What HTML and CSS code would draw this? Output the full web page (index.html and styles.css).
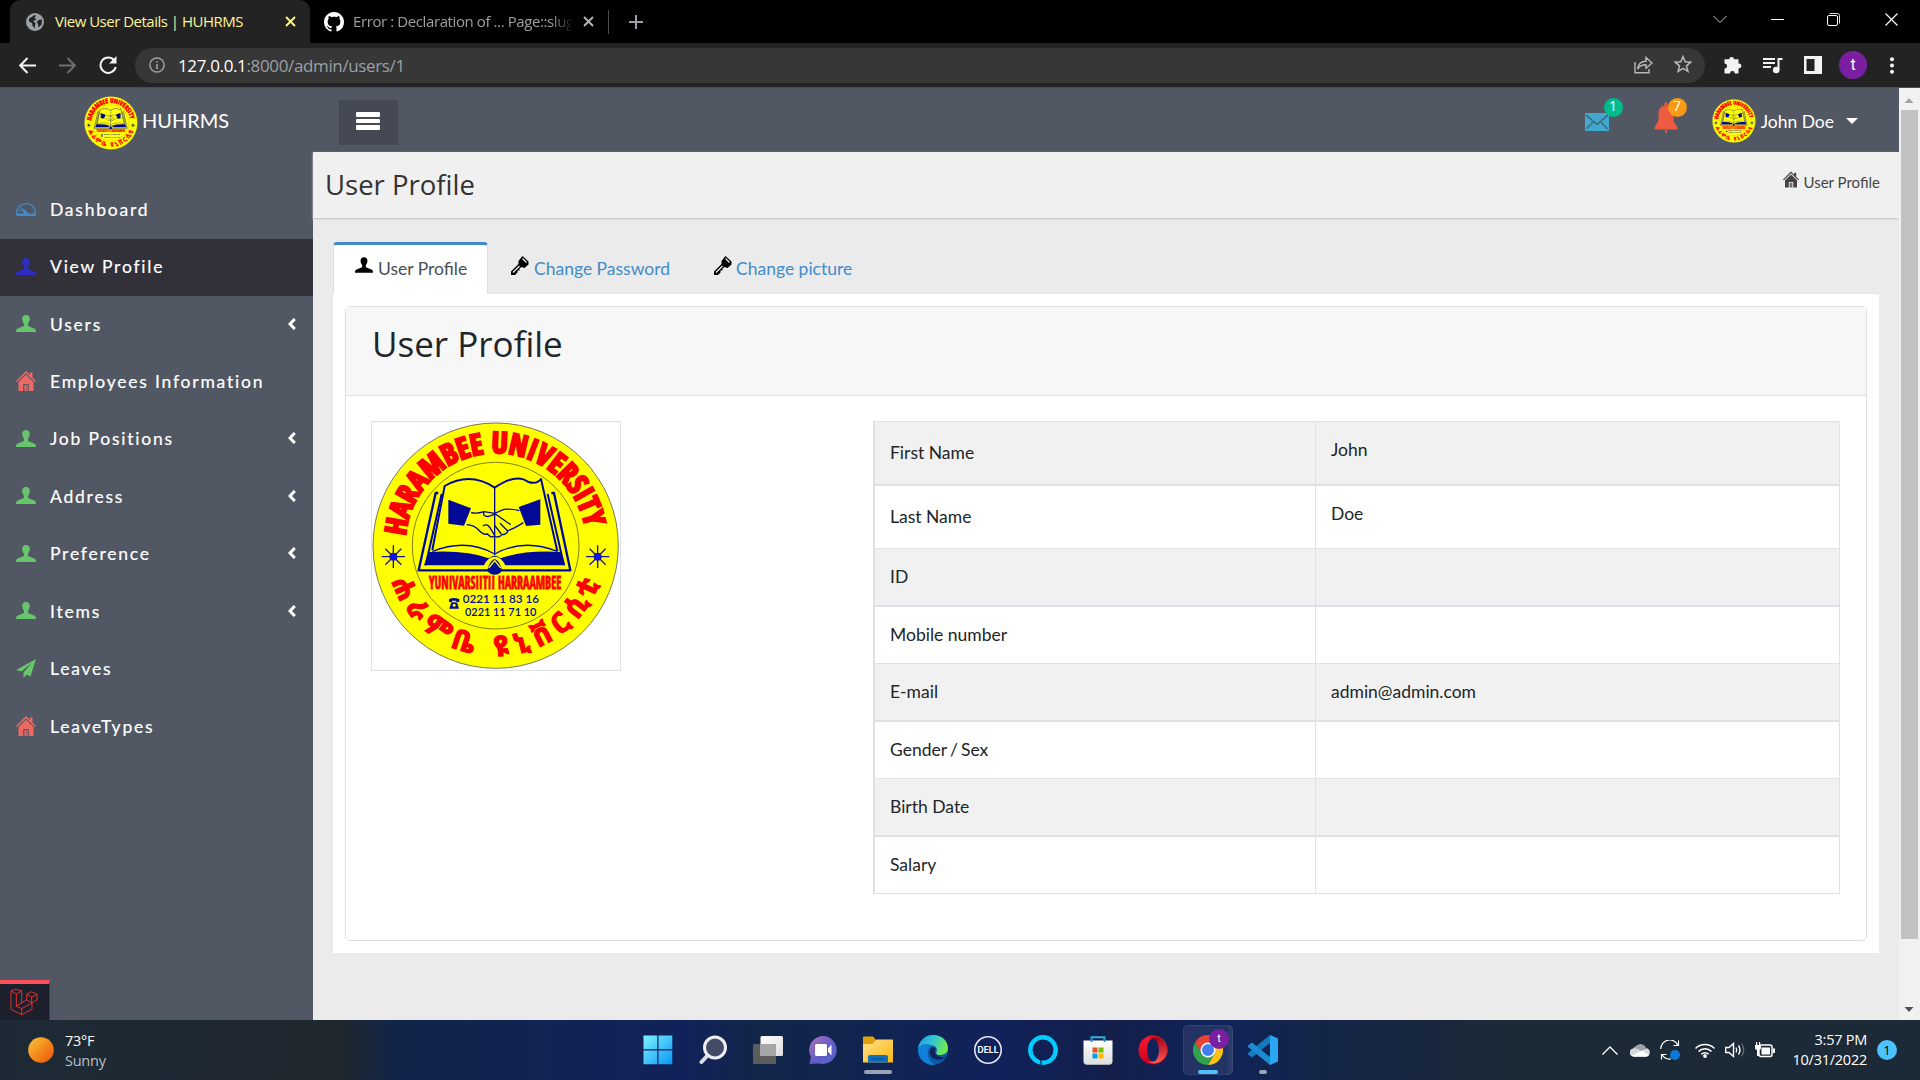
FILE: index.html
```html
<!DOCTYPE html>
<html lang="en">
<head>
<meta charset="utf-8">
<title>View User Details | HUHRMS</title>
<link rel="stylesheet" href="styles.css">
</head>
<body>
<svg class="defs" width="0" height="0" aria-hidden="true">
  <defs>
    <linearGradient id="g-win" x1="0" y1="0" x2="1" y2="1"><stop offset="0" stop-color="#7df3ff"/><stop offset="1" stop-color="#0a96f5"/></linearGradient>
    <linearGradient id="g-sun" x1="0" y1="0" x2="1" y2="1"><stop offset="0" stop-color="#f7c634"/><stop offset="0.8" stop-color="#f0660f"/></linearGradient>
    <linearGradient id="g-tv1" x1="0" y1="0" x2="1" y2="1"><stop offset="0" stop-color="#fff"/><stop offset="1" stop-color="#ddd"/></linearGradient>
    <linearGradient id="g-chat" x1="0" y1="0" x2="1" y2="1"><stop offset="0" stop-color="#b173b8"/><stop offset="0.55" stop-color="#625bc8"/><stop offset="1" stop-color="#5567c9"/></linearGradient>
    <linearGradient id="g-fold" x1="0" y1="0" x2="1" y2="1"><stop offset="0" stop-color="#ffe08a"/><stop offset="1" stop-color="#fcb911"/></linearGradient>
    <linearGradient id="g-edge" x1="0" y1="0" x2="1" y2="0.3"><stop offset="0" stop-color="#1b9de2"/><stop offset="0.55" stop-color="#35c6d6"/><stop offset="1" stop-color="#6bea50"/></linearGradient>
    <linearGradient id="g-opera" x1="0" y1="0" x2="0" y2="1"><stop offset="0" stop-color="#ff1b2d"/><stop offset="1" stop-color="#c4001b"/></linearGradient>
    <linearGradient id="g-opera2" x1="0" y1="0" x2="0" y2="1"><stop offset="0" stop-color="#a50014"/><stop offset="1" stop-color="#ff5a5a"/></linearGradient>
    <linearGradient id="g-store" x1="0" y1="0" x2="0" y2="1"><stop offset="0" stop-color="#fff"/><stop offset="1" stop-color="#dcdcdc"/></linearGradient>
    <path id="arc-top" d="M136.500 378A272 272 0 0 1 677 364"/>
    <path id="arc-bottom" d="M95 515A330 330 0 0 0 721 510"/>
    <symbol id="seal" viewBox="33 33 750 750">
      <circle cx="407" cy="407" r="368" fill="#ff0" stroke="#77775f" stroke-width="3"/>
      <circle cx="407" cy="407" r="250" fill="none" stroke="#66660a" stroke-width="2.500"/>
      <text class="seal-ring" font-size="88" textLength="782" lengthAdjust="spacingAndGlyphs"><textPath href="#arc-top" textLength="782" lengthAdjust="spacingAndGlyphs">HARAMBEE UNIVERSITY</textPath></text>
      <text class="seal-geez" font-size="84"><textPath href="#arc-bottom" textLength="812">ሐራምቤ ዩኒቨርሲቲ</textPath></text>
      <g fill="none" stroke="#000a96" stroke-width="6" stroke-linejoin="round">
        <path d="M235 249h-8L176 481H385M574 249h8L631 481H424" stroke-width="7"/>
        <path d="M245 252L197 466M563 252L612 466" />
        <path d="M217 420L254 228Q330 184 404 233Q470 188 505 216Q530 224 543 207L592 424"/>
        <path d="M217 424Q320 384 404 432Q490 384 592 424" stroke-width="4"/>
        <path d="M404 233V436" stroke-width="4"/>
      </g>
      <path d="M207 426Q320 420 386 445Q404 430 422 445Q490 420 602 426L616 466H436Q424 440 404 440T372 466H192Z" fill="#000a96"/>
      <path d="M382 482Q386 456 404 446Q422 456 426 482Q418 494 404 494T382 482Z" fill="#000a96"/>
      <path d="M386 474L404 452L422 474" stroke="#ff0" stroke-width="4" fill="none"/>
      <path d="M265 269L333 295L312 347L265 341ZM541 268L476 291L498 348L541 344Z" fill="#000a96"/>
      <path d="M333 308Q352 312 372 305L404 310L432 298Q456 296 478 302M320 344Q342 345 356 360Q370 376 382 372Q394 386 404 378Q416 386 426 374Q440 374 444 362Q462 356 490 338M372 305Q366 318 384 320L406 312L452 344M420 340L444 364M404 346L424 372M388 350L404 376M368 348Q384 340 388 352" fill="none" stroke="#000a96" stroke-width="4"/>
      <g stroke="#1a1a8c" stroke-width="4">
        <path d="M65 440H135M100 406V474M76 416L124 464M124 416L76 464M678 440H748M713 406V474M689 416L737 464M737 416L689 464"/>
        <circle cx="100" cy="440" r="10" fill="#11f"/><circle cx="713" cy="440" r="10" fill="#11f"/>
      </g>
      <text class="seal-sub" x="207" y="538" font-size="52" textLength="397" lengthAdjust="spacingAndGlyphs">YUNIVARSIITII HARRAAMBEE</text>
      <text class="seal-num" x="308" y="578" font-size="33" textLength="229" lengthAdjust="spacingAndGlyphs">0221 11 83 16</text>
      <text class="seal-num" x="315" y="617" font-size="33" textLength="214" lengthAdjust="spacingAndGlyphs">0221 11 71 10</text>
      <path d="M267 576V568Q282 560 298 568V576H289V572H276V576ZM274 577H291L297 596H268Z" fill="#000a96"/>
      <circle cx="282.500" cy="586" r="4.500" fill="#ff0"/>
    </symbol>
    <symbol id="i-user" viewBox="0 0 20 17"><path d="M10 0C7.400 0 6.100 1.700 6.200 4.100C6.300 6 7 7.600 7.900 8.600V11L1.800 13.500C.5 14.100 0 15 0 17H20C20 15 19.500 14.100 18.200 13.500L12.100 11V8.600C13 7.600 13.700 6 13.800 4.100C13.900 1.700 12.600 0 10 0Z" fill="currentColor"/></symbol>
    <symbol id="i-home" viewBox="0 0 20 20"><path d="M0 10L10 0L14 4V1.500H16.500V6.500L20 10L19 11L10 2.200L1 11Z" fill="currentColor"/><path d="M10 3.800L17.500 11V20H12.800V13H7.200V20H2.500V11Z" fill="currentColor"/><path d="M8.200 14H11.800V20H8.200Z" fill="currentColor" opacity=".75"/></symbol>
    <symbol id="i-gauge" viewBox="0 0 20 14"><path d="M1 13.300A9.300 9.300 0 1 1 19 13.300Z" fill="none" stroke="currentColor" stroke-width="1.300"/><path d="M1 11.500H8L4 4.500L11 9.500L12 11.500H19V13.500H1Z" fill="currentColor"/><circle cx="3.800" cy="8.500" r=".9" fill="currentColor"/></symbol>
    <symbol id="i-plane" viewBox="0 0 20 19"><path d="M20 0L0 11L5.500 12.500L15.500 4L7.500 13.500V19L10.500 15.700L14.500 17.500Z" fill="currentColor"/></symbol>
    <symbol id="i-key" viewBox="0 0 18 19"><path d="M11.500 0L17.500 5.500V8.500L13.500 12L10.500 11L8.500 12.500V14.500H6.500V16.500L4 19H0V15.500L7.500 8V5Z" fill="#000"/><path d="M11.500 2.500L15.500 6.500M2 16.500L8.500 10" stroke="#eee" stroke-width="1.300"/></symbol>
    <symbol id="i-left" viewBox="0 0 8 12"><path d="M6.800 1L2 6L6.800 11" fill="none" stroke="#fff" stroke-width="3"/></symbol>
  </defs>
</svg>

<div class="screen">
  <div class="tabstrip">
    <div class="btab btab-active">
      <svg class="fav" width="18" height="18" viewBox="0 0 18 18"><circle cx="9" cy="9" r="9" fill="#9aa0a6"/><path d="M3 5.500Q6 4 8 2.200L10 2.500L8.500 5L10.500 6.500L7 8L9.500 10L8.500 15.500L6.500 12.500L6 10L3 8.500ZM12.500 7L16 6.500L15.500 11.500L12.500 14.500L12 11L10.800 9Z" fill="#232323"/></svg>
      <span class="btab-title t1">View User Details | HUHRMS</span>
      <svg class="x" width="11" height="11" viewBox="0 0 11 11"><path d="M1 1L10 10M10 1L1 10" stroke="#fdf39a" stroke-width="1.900"/></svg>
    </div>
    <div class="btab btab-idle">
      <svg class="fav" width="20" height="20" viewBox="0 0 16 16"><path fill="#fff" d="M8 0C3.580 0 0 3.580 0 8c0 3.540 2.290 6.530 5.470 7.590.4.070.55-.17.55-.38 0-.19-.01-.82-.01-1.490-2.010.37-2.530-.49-2.690-.94-.09-.23-.48-.94-.82-1.130-.28-.15-.68-.52-.01-.53.63-.01 1.080.58 1.230.82.72 1.210 1.870.87 2.330.66.07-.52.28-.87.51-1.070-1.780-.2-3.640-.89-3.640-3.950 0-.87.31-1.590.82-2.150-.08-.2-.36-1.020.08-2.120 0 0 .67-.21 2.200.82.64-.18 1.320-.27 2-.27s1.360.09 2 .27c1.530-1.040 2.200-.82 2.200-.82.44 1.100.16 1.920.08 2.120.51.56.82 1.270.82 2.150 0 3.070-1.870 3.750-3.650 3.950.29.25.54.73.54 1.480 0 1.070-.01 1.930-.01 2.200 0 .21.15.46.55.38A8.010 8.010 0 0 0 16 8c0-4.420-3.580-8-8-8z"/></svg>
      <span class="btab-title t2">Error : Declaration of ... Page::slug</span>
      <svg class="x" width="11" height="11" viewBox="0 0 11 11"><path d="M1 1L10 10M10 1L1 10" stroke="#b4b8bc" stroke-width="1.800"/></svg>
    </div>
    <svg class="plus" width="14" height="14" viewBox="0 0 14 14"><path d="M7 0V14M0 7H14" stroke="#9aa0a6" stroke-width="2"/></svg>
    <div class="wincontrols">
      <svg width="14" height="9" viewBox="0 0 14 9"><path d="M.5 1L7 7.500L13.500 1" fill="none" stroke="#ccc"/></svg>
      <svg width="13" height="13" viewBox="0 0 13 13"><path d="M0 6.500H13" stroke="#fff"/></svg>
      <svg width="13" height="13" viewBox="0 0 13 13"><rect x=".5" y="2.500" width="10" height="10" rx="1.500" fill="none" stroke="#fff"/><path d="M2.500 .5H10.500Q12.500 .5 12.500 2.500V10.500" fill="none" stroke="#ddd"/></svg>
      <svg width="13" height="13" viewBox="0 0 13 13"><path d="M.5 .5L12.500 12.500M12.500 .5L.5 12.500" stroke="#fff" stroke-width="1.200"/></svg>
    </div>
  </div>

  <div class="toolbar">
    <svg width="17" height="17" viewBox="0 0 17 17"><path d="M17 8.500H1.500M8.500 1L1.200 8.500L8.500 16" fill="none" stroke="#f1f3f4" stroke-width="2"/></svg>
    <svg width="17" height="17" viewBox="0 0 17 17"><path d="M0 8.500H15.500M8.500 1L15.800 8.500L8.500 16" fill="none" stroke="#6f6f6f" stroke-width="2"/></svg>
    <svg width="18" height="18" viewBox="0 0 18 18"><path d="M15.200 4.300A7.700 7.700 0 1 0 16.700 11" fill="none" stroke="#f1f3f4" stroke-width="2"/><path d="M17.500 0V7.500H10Z" fill="#f1f3f4"/></svg>
    <div class="omnibox">
      <svg width="16" height="16" viewBox="0 0 16 16"><circle cx="8" cy="8" r="7.100" fill="none" stroke="#9aa0a6" stroke-width="1.500"/><path d="M8 7V12M8 4V5.600" stroke="#9aa0a6" stroke-width="1.700"/></svg>
      <span class="url"><b>127.0.0.1</b>:8000/admin/users/1</span>
      <svg class="share" width="19" height="18" viewBox="0 0 19 18"><path d="M1 6V16.800H15V13" fill="none" stroke="#b8b8b8" stroke-width="1.400"/><path d="M3.500 13Q4.500 5.500 12 5.300V1.500L18 7L12 12.300V8.700Q6.500 8.500 3.500 13Z" fill="none" stroke="#b8b8b8" stroke-width="1.400"/></svg>
      <svg class="star" width="18" height="18" viewBox="0 0 18 18"><path d="M9 1.500L11.200 6.700L16.800 7.200L12.500 10.800L13.900 16.300L9 13.300L4.100 16.300L5.500 10.800L1.200 7.200L6.800 6.700Z" fill="none" stroke="#b8b8b8" stroke-width="1.500"/></svg>
    </div>
    <div class="exts">
      <svg width="18" height="18" viewBox="0 0 18 18"><path d="M5.200 3.300A2.400 2.400 0 0 1 10 3.300H14.500V7.700A2.300 2.300 0 0 1 15.600 12.300H14.500V17.500H10.800A2.400 2.400 0 0 0 6 17.500H.5V12.500A2.500 2.500 0 0 0 .5 7.500V3.300Z" fill="#f1f3f4"/></svg>
      <svg width="20" height="17" viewBox="0 0 20 17"><path d="M0 2H12M0 6H12M0 10H8" stroke="#f1f3f4" stroke-width="1.900"/><path d="M15.500 13V2H19.500" fill="none" stroke="#f1f3f4" stroke-width="2"/><circle cx="13.200" cy="13" r="3.300" fill="#f1f3f4"/></svg>
      <svg width="18" height="18" viewBox="0 0 18 18"><path d="M0 0H18V18H0ZM2.500 3V15H10.500V3Z" fill="#f1f3f4" fill-rule="evenodd"/></svg>
      <span class="me">t</span>
      <svg width="4" height="17" viewBox="0 0 4 17"><circle cx="2" cy="2.200" r="2" fill="#f1f3f4"/><circle cx="2" cy="8.500" r="2" fill="#f1f3f4"/><circle cx="2" cy="14.800" r="2" fill="#f1f3f4"/></svg>
    </div>
  </div>

  <div class="viewport">
    <div class="app">
      <header class="top">
        <div class="brand"><svg width="54" height="54"><use href="#seal"/></svg><span>HUHRMS</span></div>
        <div class="burger"><i></i><i></i><i></i></div>
        <div class="notices">
          <div class="notice mail"><svg width="24" height="18" viewBox="0 0 24 18"><rect width="24" height="18" rx="1" fill="#41a9cf"/><path d="M1 2L12 11.500L23 2M1.500 16L8.500 8.500M22.500 16L15.500 8.500" fill="none" stroke="#3c6f88" stroke-width="1.700"/></svg><span class="badge green">1</span></div>
          <div class="notice bell"><svg width="24" height="32" viewBox="0 0 24 32"><circle cx="12" cy="2" r="1.700" fill="#ef5b40"/><path d="M12 3.500C6.500 3.500 4.500 7 4.500 12V18C4.500 20.500 .5 23 .5 27.500H23.500C23.500 23 19.500 20.500 19.500 18V12C19.500 7 17.500 3.500 12 3.500ZM10.500 28.500H13.500L12 32Z" fill="#ef5b40"/></svg><span class="badge orange">7</span></div>
        </div>
        <div class="account"><svg width="44" height="44"><use href="#seal"/></svg><span>John Doe</span><i class="caret"></i></div>
      </header>
      <div class="below">
        <nav class="side">
          <a><svg width="20" height="14" class="blue"><use href="#i-gauge"/></svg><span>Dashboard</span></a>
          <a class="on"><svg width="20" height="17" class="navy"><use href="#i-user"/></svg><span>View Profile</span></a>
          <a><svg width="20" height="17" class="grn"><use href="#i-user"/></svg><span>Users</span><svg class="arr" width="8" height="12"><use href="#i-left"/></svg></a>
          <a><svg width="20" height="20" class="red"><use href="#i-home"/></svg><span>Employees Information</span></a>
          <a><svg width="20" height="17" class="grn"><use href="#i-user"/></svg><span>Job Positions</span><svg class="arr" width="8" height="12"><use href="#i-left"/></svg></a>
          <a><svg width="20" height="17" class="grn"><use href="#i-user"/></svg><span>Address</span><svg class="arr" width="8" height="12"><use href="#i-left"/></svg></a>
          <a><svg width="20" height="17" class="grn"><use href="#i-user"/></svg><span>Preference</span><svg class="arr" width="8" height="12"><use href="#i-left"/></svg></a>
          <a><svg width="20" height="17" class="grn"><use href="#i-user"/></svg><span>Items</span><svg class="arr" width="8" height="12"><use href="#i-left"/></svg></a>
          <a><svg width="20" height="19" class="grn"><use href="#i-plane"/></svg><span>Leaves</span></a>
          <a><svg width="20" height="20" class="red"><use href="#i-home"/></svg><span>LeaveTypes</span></a>
          <div class="debug"><svg width="28" height="28" viewBox="30 174 84 84"><path d="M33 183L48 178L65 183L49 192ZM33 183V238L65 254L96 238V219M65 183V219M49 192V228L65 236V254M65 236L96 219M49 228L80 210M80 193L95 185L111 193L95 201ZM80 193V210L95 218L111 210V193M95 201V218" fill="none" stroke="#e3302a" stroke-width="3"/></svg></div>
        </nav>
        <main class="main">
          <div class="pagehead"><h1>User Profile</h1><div class="crumb"><svg width="16" height="17"><use href="#i-home"/></svg><span>User Profile</span></div></div>
          <div class="content">
            <div class="tabs">
              <div class="tab current"><svg width="18" height="16"><use href="#i-user"/></svg><span>User Profile</span></div>
              <div class="tab second"><svg width="18" height="19"><use href="#i-key"/></svg><span>Change Password</span></div>
              <div class="tab third"><svg width="18" height="19"><use href="#i-key"/></svg><span>Change picture</span></div>
            </div>
            <div class="pane">
              <div class="card">
                <h2>User Profile</h2>
                <div class="cardbody">
                  <svg class="photo" width="250" height="250"><use href="#seal"/></svg>
                  <div class="table">
                    <div class="row tall odd"><div>First Name</div><div>John</div></div>
                    <div class="row tall"><div>Last Name</div><div>Doe</div></div>
                    <div class="row odd"><div>ID</div><div></div></div>
                    <div class="row"><div>Mobile number</div><div></div></div>
                    <div class="row odd"><div>E-mail</div><div>admin@admin.com</div></div>
                    <div class="row"><div class="gender">Gender / Sex</div><div></div></div>
                    <div class="row odd"><div>Birth Date</div><div></div></div>
                    <div class="row"><div>Salary</div><div></div></div>
                  </div>
                </div>
              </div>
            </div>
          </div>
        </main>
      </div>
    </div>
    <div class="scroll"><svg width="21" height="22" viewBox="0 0 21 22"><path d="M5.500 15L10 10L14.500 15Z" fill="#a3a3a3"/></svg><div class="thumb"></div><svg width="21" height="22" viewBox="0 0 21 22"><path d="M5.500 9L10 14L14.500 9Z" fill="#505050"/></svg></div>
  </div>

  <footer class="taskbar">
    <div class="weather"><svg width="26" height="26"><circle cx="13" cy="13" r="12.800" fill="url(#g-sun)"/></svg><div><span>73°F</span><span class="dim">Sunny</span></div></div>
    <div class="apps">
      <div><svg width="30" height="30" viewBox="0 0 30 30"><path d="M.5 .5H14.300V14.300H.5ZM15.500 .5H29.300V14.300H15.500ZM.5 15.500H14.300V29.300H.5ZM15.500 15.500H29.300V29.300H15.500Z" fill="url(#g-win)"/></svg></div>
      <div><svg width="30" height="30" viewBox="0 0 30 30"><path d="M10.500 19.500L3.500 27" stroke="#d8dde6" stroke-width="4" stroke-linecap="round"/><circle cx="17" cy="12.500" r="10.500" fill="#414a66" stroke="#eceef2" stroke-width="3"/></svg></div>
      <div><svg width="30" height="30" viewBox="0 0 30 30"><rect x="0" y="9" width="23" height="20" rx="1.500" fill="#5c5c5c"/><rect x="7.500" y="1" width="22.500" height="20" rx="1.500" fill="url(#g-tv1)"/><rect x="7.500" y="9" width="15.500" height="12" fill="#a6a6a6"/></svg></div>
      <div><svg width="30" height="30" viewBox="0 0 30 30"><path d="M15 1A14 14 0 1 1 11 28.500L1.500 29L3 22A14 14 0 0 1 15 1Z" fill="url(#g-chat)"/><rect x="7" y="9" width="12" height="12" rx="1.500" fill="#fff"/><path d="M20 13.500L23.500 9.500V20.500L20 16.500Z" fill="#fff"/></svg></div>
      <div class="open"><svg width="30" height="30" viewBox="0 0 30 30"><path d="M0 2.500Q0 1.500 1 1.500H10L13 5H28V12H0Z" fill="#e0a010"/><path d="M0 9H9.500L13.500 4.500H29Q30 4.500 30 5.500V27.500H0Z" fill="url(#g-fold)"/><path d="M5 27.500V22Q5 20 7 20H23Q25 20 25 22V27.500Z" fill="#0f6fc0"/><path d="M8.500 24H21.500" stroke="#0a4a8c" stroke-width="1.200"/></svg></div>
      <div><svg width="30" height="30" viewBox="0 0 30 30"><circle cx="15" cy="15" r="15" fill="#0c59a4"/><path d="M0 15A15 15 0 0 1 15 0C25 0 30 7 30 13C30 18 26 20 22 20C19 20 17.500 18.500 18.500 17C20 13 17 10.500 14 10.500C8 8 2 10 0 15Z" fill="url(#g-edge)"/><path d="M0 15C1 9 8 8 14 10.500C8 13 8 25 17 29.800A15 15 0 0 1 0 15Z" fill="#0f7fd8"/><path d="M13 13Q9 21 17 24Q23 26 28 22Q24 23 20 21Q15 18 18 14Q15 11 13 13Z" fill="#10245a"/></svg></div>
      <div><svg width="30" height="30" viewBox="0 0 30 30"><circle cx="15" cy="15" r="13.200" fill="none" stroke="#e4e7ef" stroke-width="1.600"/><text x="4.500" y="18" font-family="Inter, sans-serif" font-size="8.500" font-weight="700" fill="#fff" textLength="21" lengthAdjust="spacingAndGlyphs">DELL</text></svg></div>
      <div><svg width="30" height="30" viewBox="0 0 30 30"><circle cx="15" cy="15" r="12.700" fill="none" stroke="#00cafe" stroke-width="4.500"/><path d="M12.500 24.500L13.500 30" stroke="#10235a" stroke-width="1.200"/></svg></div>
      <div><svg width="30" height="30" viewBox="0 0 30 30"><path d="M8.500 8V2.200H21.500V8" fill="none" stroke="#30b4ea" stroke-width="1.900"/><path d="M.5 5.500H29.500V26Q29.500 29.800 26 29.800H4Q.5 29.800 .5 26Z" fill="url(#g-store)"/><path d="M8.500 2.500V7M21.500 2.500V7" stroke="#1888c8" stroke-width="1.800"/><path d="M9.500 12.500H14.500V17.500H9.500Z" fill="#f25022"/><path d="M15.500 12.500H20.500V17.500H15.500Z" fill="#7fba00"/><path d="M9.500 18.500H14.500V23.500H9.500Z" fill="#00a4ef"/><path d="M15.500 18.500H20.500V23.500H15.500Z" fill="#ffb900"/></svg></div>
      <div><svg width="30" height="30" viewBox="0 0 30 30"><ellipse cx="15" cy="15" rx="14.500" ry="14.500" fill="url(#g-opera)"/><path d="M10 3.500Q15 0 22 3Q29.500 8 29.500 15T22 27Q15 30 10 26.500Q19 28 20.500 15T10 3.500Z" fill="url(#g-opera2)"/><ellipse cx="15" cy="15" rx="6" ry="11.500" fill="#10235a"/></svg></div>
      <div class="chrome"><svg width="30" height="30" viewBox="0 0 30 30"><path d="M21.500 18.500L15 30A15 15 0 0 0 28 7.500H15Z" fill="#fbc116"/><path d="M15 7.500H28A15 15 0 0 0 2 7.500L8.500 18.500Z" fill="#e94335"/><path d="M8.500 18.500L2 7.500A15 15 0 0 0 15 30L21.500 18.500Z" fill="#31a350"/><circle cx="15" cy="15" r="7.500" fill="#fff"/><circle cx="15" cy="15" r="6" fill="#3f7ff0"/></svg><span class="chromebadge">t</span></div>
      <div class="open small"><svg width="30" height="30" viewBox="0 0 30 30"><path d="M22 0L22 8L4 22.500L0 19.500V18Z" fill="#1479bd"/><path d="M22 30L22 22L4 7.500L0 10.500V12Z" fill="#1a8ad2"/><path d="M22 0L30 3.500V26.500L22 30Z" fill="#2aa7f2"/></svg></div>
    </div>
    <div class="tray">
      <svg class="up" width="16" height="9" viewBox="0 0 16 9"><path d="M.5 8.500L8 1L15.500 8.500" fill="none" stroke="#fff" stroke-width="1.300"/></svg>
      <svg width="20" height="14" viewBox="0 0 20 14"><path d="M3 9A5 5 0 0 1 6 3A6 6 0 0 1 16 5L10 9Z" fill="#9aa3ab"/><path d="M4 13.500A3.700 3.700 0 0 1 3.500 5.500Q6 4.500 11 8L16 5.200A4.200 4.200 0 0 1 16.500 13.500Z" fill="#d5d9dc"/><path d="M2 12.500L12 7.500L19 12Q18 13.700 16 13.700H4Q2.500 13.700 2 12.500Z" fill="#fff"/></svg>
      <svg width="20" height="20" viewBox="0 0 20 20"><path d="M.7 9A9 9 0 0 1 18 5.500M18.500 .5V5.500H13.500M1.500 19.500V14.500H6.500M2 14.500A9 9 0 0 0 11 19" fill="none" stroke="#fff" stroke-width="1.200"/><circle cx="15" cy="15" r="5" fill="#0a78d7"/></svg>
      <svg class="wifi" width="20" height="16" viewBox="0 0 20 16"><path d="M.5 6.500A13.300 13.300 0 0 1 19.500 6.500M3.500 9.500A9 9 0 0 1 16.500 9.500M6.300 12.300A5.200 5.200 0 0 1 13.700 12.300" fill="none" stroke="#fff" stroke-width="1.500"/><circle cx="10" cy="14" r="1.900" fill="#fff"/></svg>
      <svg width="20" height="16" viewBox="0 0 20 16"><path d="M.7 5.500H4L8.500 1.500V14.500L4 10.500H.7Z" fill="none" stroke="#fff" stroke-width="1.400"/><path d="M11 5.500Q12.500 8 11 10.500M13.500 3.500Q16.500 8 13.500 12.500" fill="none" stroke="#fff" stroke-width="1.400"/><path d="M16.500 1.500Q21 8 16.500 14.500" fill="none" stroke="#68727c" stroke-width="1.200"/></svg>
      <svg width="20" height="16" viewBox="0 0 20 16"><rect x="4" y="3" width="13" height="11.500" rx="2" fill="none" stroke="#fff" stroke-width="1.500"/><rect x="6.500" y="5.500" width="8.500" height="7" fill="#fff"/><path d="M18 6.500H20V11H18Z" fill="#fff"/><path d="M0 3H6V6Q6 8 4 8V14H2V8Q0 8 0 6ZM1 0H2.200V3H1ZM4 0H5.200V3H4Z" fill="#fff"/></svg>
    </div>
    <div class="clock"><span>3:57 PM</span><span>10/31/2022</span></div>
    <span class="count">1</span>
  </footer>
</div>
</body>
</html>
```

FILE: styles.css
```css
* { box-sizing: border-box; }
body { margin: 0; width: 1920px; height: 1080px; overflow: hidden; font-family: Lato, "Liberation Sans", sans-serif; font-size: 17.5px; color: #212529; }
svg { display: block; flex: none; }
.defs { position: absolute; }
h1, h2 { margin: 0; font-family: "Open Sans", sans-serif; font-weight: 400; }
.screen { display: flex; flex-direction: column; height: 1080px; }

/* logo lettering */
.seal-ring, .seal-sub { font-family: "Open Sans Condensed", "Open Sans", sans-serif; font-stretch: 75%; font-weight: 800; fill: #f00; stroke: #f00; stroke-width: 7px; }
.seal-sub { stroke-width: 2.5px; }
.seal-geez { font-family: "Noto Sans Ethiopic", "Noto Serif Ethiopic", sans-serif; font-weight: 700; fill: #f00; stroke: #f00; stroke-width: 4px; }
.seal-num { font-family: Lato, sans-serif; font-weight: 600; fill: #000a96; }

/* browser tabs */
.tabstrip { display: flex; align-items: center; height: 43px; background: #000; font-family: "Open Sans", sans-serif; font-size: 15px; padding-left: 10px; }
.btab { display: flex; align-items: center; height: 43px; }
.btab-active { width: 300px; padding: 0 14px 0 16px; background: #232323; border-radius: 10px 10px 0 0; }
.btab-title { white-space: nowrap; overflow: hidden; margin-top: -2px; }
.t1 { margin-left: 11px; letter-spacing: -0.5px; color: #fdf39a; }
.btab .x { margin-left: auto; }
.btab-idle { width: 299px; padding: 0 15px 0 14px; position: relative; }
.btab-idle::after { content: ""; position: absolute; right: 0; top: 10px; height: 24px; border-right: 1px solid #4a4a4a; }
.t2 { width: 220px; margin-left: 9px; letter-spacing: -0.4px; color: #9aa0a6; -webkit-mask-image: linear-gradient(90deg, #000 90%, transparent); mask-image: linear-gradient(90deg, #000 90%, transparent); }
.plus { margin-left: 20px; }
.wincontrols { display: flex; align-items: center; gap: 46px; margin-left: auto; margin-right: 22px; height: 38px; align-self: flex-start; }
.wincontrols svg:first-child { margin-right: -2px; }
.wincontrols svg:nth-child(2) { margin-right: -3px; }
.wincontrols svg:nth-child(3) { margin-right: -1px; }

/* toolbar */
.toolbar { display: flex; align-items: center; height: 45px; background: #232323; border-bottom: 1px solid #4c4c4c; padding-left: 19px; gap: 23px; }
.omnibox { display: flex; align-items: center; width: 1570px; height: 35px; border-radius: 18px; background: #373737; margin-left: -5px; padding: 0 13px 0 14px; font-family: "Open Sans", sans-serif; }
.url { margin-left: 13px; font-size: 17px; letter-spacing: -0.36px; color: #9aa0a6; }
.url b { font-weight: 400; color: #fff; }
.share { margin-left: auto; }
.star { margin-left: 21px; margin-top: -2px; }
.exts { display: flex; align-items: center; gap: 21px; margin-left: -4px; }
.me { width: 28px; height: 28px; border-radius: 50%; background: #7b1fa2; color: #fff; font: 16px/27px Roboto, sans-serif; text-align: center; margin: 0 2px 0 -4px; }

/* page */
.viewport { display: flex; height: 932px; }
.app { width: 1899px; display: flex; flex-direction: column; }
.top { display: flex; height: 64px; background: #515763; color: #fff; }
.brand { display: flex; width: 313px; padding: 8px 0 0 84px; font-size: 20px; gap: 4px; }
.brand span { line-height: 48px; }
.burger { display: flex; flex-direction: column; gap: 2px; width: 59px; height: 45px; margin: 12px 0 0 26px; padding: 12px 18px 0 17px; background: #454954; }
.burger i { height: 4.5px; background: #fff; border-radius: 1px; }
.notices { display: flex; gap: 45px; margin-left: auto; }
.notice { position: relative; width: 24px; }
.mail svg { margin-top: 25px; }
.bell svg { margin-top: 14px; }
.badge { position: absolute; top: 10px; width: 19px; height: 19px; border-radius: 50%; text-align: center; font: 14px/15px "Open Sans", sans-serif; }
.mail .badge { left: 19px; background: #00bc8c; }
.bell .badge { left: 14px; background: #f89a14; }
.account { display: flex; align-items: center; height: 66px; margin: 0 41px 0 34px; }
.account span { margin-left: 5px; }
.caret { margin-left: 12px; border: 6px solid transparent; border-top-color: #fff; border-bottom: 0; }

.below { display: flex; flex: 1; }
.side { display: flex; flex-direction: column; width: 313px; background: #515763; padding-top: 29.5px; }
.side a { display: flex; align-items: center; height: 57.45px; padding: 0 17px 0 16px; color: #fff; letter-spacing: 1.78px; font-size: 17.5px; -webkit-text-stroke: 0.2px #fff; }
.side a span { margin: -2px 0 0 14px; }
.side a svg { margin-top: -3px; }
.side .on { background: #323039; }
.side .arr { margin-left: auto; }
.blue { color: #428bca; }
.navy { color: #2d2dc4; }
.grn { color: #67c56c; }
.red { color: #ec6964; }
.debug { display: flex; width: 50px; height: 40px; margin-top: auto; padding: 4px 0 0 10px; border-top: 4px solid #ff4f59; background: #1b202c; border-right: 1px solid #3a4050; }

.main { display: flex; flex-direction: column; flex: 1; background: #ebebeb; }
.pagehead { display: flex; justify-content: space-between; height: 67px; background: #f0f0f0; border-bottom: 1px solid #ccc; box-shadow: 0 1px 2px #ddd; padding: 0 19px 0 12px; }
.pagehead h1 { font-size: 27.5px; line-height: 66px; color: #333; }
.crumb { display: flex; gap: 5px; font-size: 15px; color: #444; padding-top: 19px; }
.crumb span { line-height: 23px; }
.content { padding: 23px 20px 0; }
.tabs { display: flex; height: 52px; border-bottom: 1px solid #dee2e6; }
.tab { display: flex; gap: 5px; padding: 14px 0 0 23px; color: #428bca; }
.tab span { line-height: 26px; white-space: nowrap; }
.tab.current { width: 155px; height: 52px; padding: 12px 0 0 21px; background: #fff; border: 1px solid #dee2e6; border-top: 3px solid #428bca; border-bottom: 0; border-radius: 4px 4px 0 0; color: #495057; }
.tab.current span { line-height: 24px; }
.tab.current svg { color: #000; }
.tab.second { width: 203px; }
.tab.third { gap: 4px; }
.pane { height: 659px; padding: 12px; background: #fff; }
.card { height: 635px; border: 1px solid #dfdfdf; border-radius: 5px; }
.card h2 { height: 89px; padding: 0 0 0 26px; font-size: 35px; line-height: 74px; background: #f7f7f7; border-bottom: 1px solid #dfdfdf; }
.cardbody { display: flex; justify-content: space-between; padding: 25px 26px 0 25px; }
.photo { outline: 1px solid #dee2e6; outline-offset: -1px; }
.table { width: 967px; border: solid #dee2e6; border-width: 1px 1px 0 2px; }
.row { display: flex; height: 57px; border-bottom: 1px solid #dee2e6; }
.row.odd { height: 58px; border-bottom-width: 2px; background: #f1f1f1; }
.row.tall { height: 63px; }
.row.tall.odd { height: 64px; }
.row div { line-height: 56px; padding-left: 15px; }
.row.tall div { line-height: 62px; }
.row.tall div + div { line-height: 56px; }
.row .gender { word-spacing: -1.3px; }
.row div:first-child { width: 440px; }
.row div + div { flex: 1; border-left: 1px solid #dee2e6; }

.scroll { display: flex; flex-direction: column; width: 21px; background: #f1f1f1; }
.thumb { width: 17px; height: 829px; margin: 0 0 auto 2px; background: #c1c1c1; }

/* taskbar */
.taskbar { display: flex; height: 60px; color: #fff; font-family: "Open Sans", sans-serif; font-size: 14.5px; background: linear-gradient(90deg, #1d2a35 0, #20272f 340px, #10254a 400px, #11225a 680px, #112649 760px, #10225a 1000px, #141f4a 1110px, #10235a 1220px, #132547 1320px, #1c2937 1500px, #1c2a37 100%); }
.weather { display: flex; align-items: center; width: 630px; padding-left: 28px; gap: 11px; letter-spacing: -0.25px; }
.weather div { display: flex; flex-direction: column; line-height: 20px; padding-top: 1px; }
.dim { color: #bcc1c4; }
.apps { display: flex; width: 660px; }
.apps div { position: relative; display: flex; align-items: center; justify-content: center; width: 55px; }
.apps .open::after { content: ""; position: absolute; bottom: 6px; width: 28px; height: 4px; border-radius: 2px; background: #9aa2b4; }
.apps .small::after { width: 8px; }
.apps .chrome { width: 50px; height: 50px; margin: 5px 2px 0 3px; border-radius: 5px; background: #ffffff14; box-shadow: inset 0 0 0 1px #ffffff12, inset -6px 0 0 -1px #ffffff0a; }
.chrome::after { content: ""; position: absolute; bottom: 1px; width: 20px; height: 4px; border-radius: 2px; background: #4cc2ff; }
.chromebadge { position: absolute; left: 26px; top: 4px; width: 20px; height: 20px; border-radius: 50%; background: #7b1fa2; font: 11px/19px Roboto, sans-serif; text-align: center; }
.tray { display: flex; align-items: center; gap: 10px; margin-left: 312px; }
.up { margin-right: 2px; }
.wifi { margin-left: 5px; }
.clock { display: flex; flex-direction: column; width: 92px; padding-top: 10px; line-height: 20px; text-align: right; letter-spacing: -0.25px; white-space: nowrap; }
.count { width: 20px; height: 20px; margin: 20px 0 0 10px; border-radius: 50%; background: #4cc2ff; color: #000; font-size: 13px; line-height: 20px; text-align: center; }
```
